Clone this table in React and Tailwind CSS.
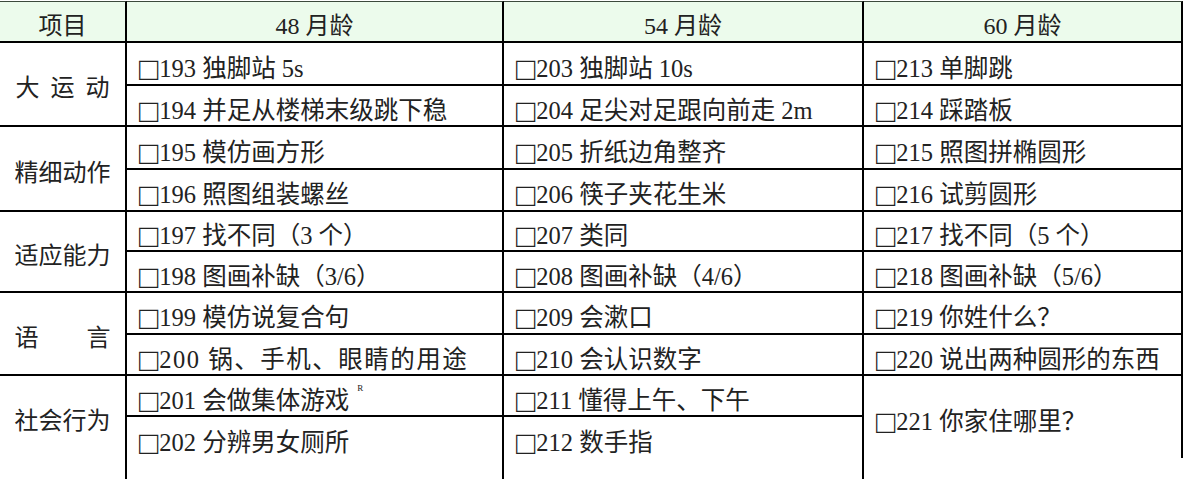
const groups = [
  {
    label: (
      <span className="flex gap-[11px]">
        <span>大</span>
        <span>运</span>
        <span>动</span>
      </span>
    ),
    rows: [
      ["□193 独脚站 5s", "□203 独脚站 10s", "□213 单脚跳"],
      ["□194 并足从楼梯末级跳下稳", "□204 足尖对足跟向前走 2m", "□214 踩踏板"],
    ],
  },
  {
    label: "精细动作",
    rows: [
      ["□195 模仿画方形", "□205 折纸边角整齐", "□215 照图拼椭圆形"],
      ["□196 照图组装螺丝", "□206 筷子夹花生米", "□216 试剪圆形"],
    ],
  },
  {
    label: "适应能力",
    rows: [
      ["□197 找不同（3 个）", "□207 类同", "□217 找不同（5 个）"],
      ["□198 图画补缺（3/6）", "□208 图画补缺（4/6）", "□218 图画补缺（5/6）"],
    ],
  },
  {
    label: (
      <span className="flex w-[96px] justify-between">
        <span>语</span>
        <span>言</span>
      </span>
    ),
    rows: [
      ["□199 模仿说复合句", "□209 会漱口", "□219 你姓什么？"],
      ["□200 锅、手机、眼睛的用途", "□210 会认识数字", "□220 说出两种圆形的东西"],
    ],
  },
];

const font = {
  fontFamily: '"Liberation Serif", "Noto Sans CJK SC", serif',
};

const cell = "border-r-2 border-b-2 border-black flex items-center pt-[10px] pl-[12px] leading-[24px] whitespace-nowrap";
const labelCell = "row-span-2 border-r-2 border-b-2 border-black flex items-center justify-center pt-[8px] leading-[24px] text-[24px]";
const headCell = "border-t border-[#3c4a3c] border-b-2 border-b-black border-r-2 border-r-black bg-[#ecfbec] flex items-center justify-center pt-[9px] leading-[24px] text-[24px]";

const Item = ({ text, wide }) => {
  return (
    <span className={wide ? "tracking-[1.5px]" : ""}>
      <span className="inline-block text-[32px] leading-[24px] tracking-normal align-top mr-[1px]">{text[0]}</span>
      {text.slice(1)}
    </span>
  );
};

export default function App() {
  return (
    <div className="w-[1183px] h-[479px] bg-white pt-px text-[24.5px] text-[#222] overflow-hidden" style={font}>
      <div className="grid grid-cols-[127px_377px_360px_319px] grid-rows-[42px_43px_41px_43px_42px_40px_41px_42px_41px_41px_41px_21px]">
        <div className={headCell}>项目</div>
        <div className={headCell}>48&nbsp;月龄</div>
        <div className={headCell}>54&nbsp;月龄</div>
        <div className={headCell}>60&nbsp;月龄</div>

        {groups.map((g, gi) => (
          <Group key={gi} g={g} />
        ))}

        {/* 社会行为 */}
        <div className="row-span-2 border-r-2 border-black flex items-center justify-center pt-[8px] leading-[24px] text-[24px]">
          社会行为
        </div>
        <div className={cell}>
          <Item text="□201 会做集体游戏" />
          <span className="relative -top-[12px] ml-[8px] text-[9px] leading-none">R</span>
        </div>
        <div className={cell}>
          <Item text="□211 懂得上午、下午" />
        </div>
        <div className="row-span-2 border-r-2 border-black flex items-center pt-[10px] pl-[12px] leading-[24px]">
          <Item text="□221 你家住哪里？" />
        </div>
        <div className="border-r-2 border-black flex items-center pt-[10px] pl-[12px] leading-[24px]">
          <Item text="□202 分辨男女厕所" />
        </div>
        <div className="border-r-2 border-black flex items-center pt-[10px] pl-[12px] leading-[24px]">
          <Item text="□212 数手指" />
        </div>

        <div className="border-r-2 border-black"></div>
        <div className="border-r-2 border-black"></div>
        <div className="border-r-2 border-black"></div>
        <div></div>
      </div>
    </div>
  );
}

const Group = ({ g }) => {
  return (
    <>
      <div className={labelCell}>{g.label}</div>
      {g.rows[0].map((t, i) => (
        <div key={"a" + i} className={cell}>
          <Item text={t} />
        </div>
      ))}
      {g.rows[1].map((t, i) => (
        <div key={"b" + i} className={cell}>
          <Item text={t} wide={t.startsWith("□200")} />
        </div>
      ))}
    </>
  );
};
